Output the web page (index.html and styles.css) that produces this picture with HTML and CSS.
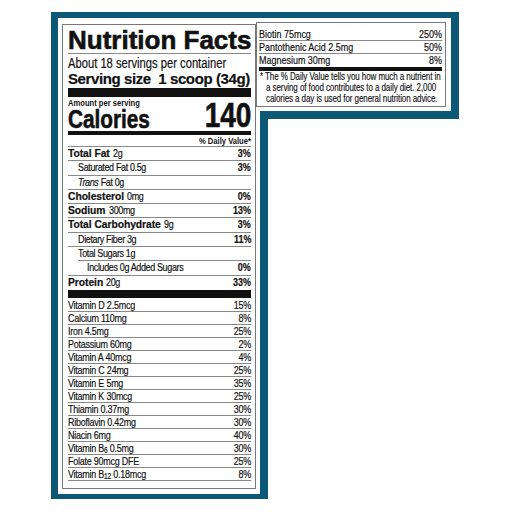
FILE: index.html
```html
<!DOCTYPE html>
<html lang="en">

<head>
    <title>Nutrition Facts</title>
    <link rel="stylesheet" href="styles.css">
</head>

<body>
    <div class="frame">
        <div class="main-col">
            <div class="sheet">
                <div class="label">
                    <h1 class="title">Nutrition Facts</h1>
                    <div class="servings"><span class="cn">About 18 servings per container</span></div>
                    <div class="serving-size">Serving size&nbsp; 1 scoop (34g)</div>
                    <div class="bar bar-thick"></div>

                    <div class="cal-row">
                        <div class="cal-left">
                            <div class="amount"><span class="cn">Amount per serving</span></div>
                            <div class="calories"><span class="cn">Calories</span></div>
                        </div>
                        <div class="cal-num"><span class="cn-r">140</span></div>
                    </div>
                    <div class="bar bar-mid"></div>
                    <div class="dv-head"><span class="cn-r">% Daily Value*</span></div>

                    <ul class="rows">
                        <li class="row"><span><b>Total Fat</b> <span class="cn">2g</span></span><strong class="cn-r">3%</strong></li>
                        <li class="row indent"><span class="cn">Saturated Fat 0.5g</span><strong class="cn-r">3%</strong></li>
                        <li class="row indent"><span class="cn"><i>Trans</i> Fat 0g</span></li>
                        <li class="row"><span><b>Cholesterol</b> <span class="cn">0mg</span></span><strong class="cn-r">0%</strong></li>
                        <li class="row"><span><b>Sodium</b> <span class="cn">300mg</span></span><strong class="cn-r">13%</strong></li>
                        <li class="row"><span><b>Total Carbohydrate</b> <span class="cn">9g</span></span><strong class="cn-r">3%</strong></li>
                        <li class="row indent"><span class="cn">Dietary Fiber 3g</span><strong class="cn-r">11%</strong></li>
                        <li class="row short"><span class="cn">Total Sugars 1g</span></li>
                        <li class="row indent2"><span class="cn">Includes 0g Added Sugars</span><strong class="cn-r">0%</strong></li>
                        <li class="row last"><span><b>Protein</b> <span class="cn">20g</span></span><strong class="cn-r">33%</strong></li>
                    </ul>
                    <div class="bar bar-thick2"></div>

                    <ul class="vitamins">
                        <li class="vit"><span>Vitamin D 2.5mcg</span><span>15%</span></li>
                        <li class="vit"><span>Calcium 110mg</span><span>8%</span></li>
                        <li class="vit"><span>Iron 4.5mg</span><span>25%</span></li>
                        <li class="vit"><span>Potassium 60mg</span><span>2%</span></li>
                        <li class="vit"><span>Vitamin A 40mcg</span><span>4%</span></li>
                        <li class="vit"><span>Vitamin C 24mg</span><span>25%</span></li>
                        <li class="vit"><span>Vitamin E 5mg</span><span>35%</span></li>
                        <li class="vit"><span>Vitamin K 30mcg</span><span>25%</span></li>
                        <li class="vit"><span>Thiamin 0.37mg</span><span>30%</span></li>
                        <li class="vit"><span>Riboflavin 0.42mg</span><span>30%</span></li>
                        <li class="vit"><span>Niacin 6mg</span><span>40%</span></li>
                        <li class="vit"><span>Vitamin B<sub>6</sub> 0.5mg</span><span>30%</span></li>
                        <li class="vit"><span>Folate 90mcg DFE</span><span>25%</span></li>
                        <li class="vit"><span>Vitamin B<sub>12</sub> 0.18mcg</span><span>8%</span></li>
                    </ul>
                </div>
            </div>
        </div>

        <div class="side-col">
            <div class="side-sheet">
                <div class="label side-label">
                    <ul class="vitamins side-rows">
                        <li class="vit"><span>Biotin 75mcg</span><span>250%</span></li>
                        <li class="vit"><span>Pantothenic Acid 2.5mg</span><span>50%</span></li>
                        <li class="vit last"><span>Magnesium 30mg</span><span>8%</span></li>
                    </ul>
                    <div class="bar bar-side"></div>
                    <p class="footnote">* The % Daily Value tells you how much a nutrient in<br>
                        a serving of food contributes to a daily diet. 2,000<br>
                        calories a day is used for general nutrition advice.</p>
                </div>
            </div>
        </div>
    </div>
</body>

</html>
```

FILE: styles.css
```css
body {
    margin: 0;
    background: white;
    color: #111;
    font-family: 'Liberation Sans', Arial, sans-serif;
}

/* no condensed face installed, so squeeze the regular one */
.cn,
.cn-r {
    display: inline-block;
    transform: scaleX(0.8);
    transform-origin: left center;
}

.cn-r {
    transform-origin: right center;
}

.frame {
    display: flex;
    align-items: flex-start;
    margin: 12px 0 0 51px;
}

.main-col {
    background: #0c5877;
    padding: 6px 8px 5px 7px;
    width: 217px;
    box-sizing: border-box;
}

.sheet {
    background: white;
    padding: 6px 4px 5px 4px;
}

.label {
    border: 1px solid #777;
    padding: 3px 4px 7px 5px;
}

.title {
    margin: 0;
    font-size: 26px;
    line-height: 25px;
    font-weight: bold;
    -webkit-text-stroke: 0.6px #111;
    border-bottom: 1px solid #888;
    white-space: nowrap;
}

.servings {
    margin-top: 1px;
    font-size: 14px;
    line-height: 16px;
    white-space: nowrap;
    -webkit-text-stroke: 0.2px #111;
}

.serving-size {
    font-weight: bold;
    font-size: 15px;
    line-height: 16px;
    letter-spacing: -0.4px;
    white-space: nowrap;
    -webkit-text-stroke: 0.2px #111;
}

.bar {
    background: #111;
}

.bar-thick {
    height: 9px;
    margin-top: 1px;
}

.cal-row {
    display: flex;
    justify-content: space-between;
    align-items: flex-end;
    white-space: nowrap;
}

.amount {
    padding-top: 1px;
    font-size: 9.5px;
    line-height: 10px;
    font-weight: bold;
}

.calories {
    font-size: 25px;
    line-height: 22px;
    font-weight: bold;
    -webkit-text-stroke: 0.6px #111;
}

.calories .cn {
    transform: scaleX(0.83);
}

.cal-num {
    font-size: 35px;
    line-height: 30px;
    font-weight: bold;
    -webkit-text-stroke: 0.6px #111;
}

.bar-mid {
    height: 4px;
    margin-top: 1px;
}

.dv-head {
    text-align: right;
    font-size: 9.5px;
    line-height: 11px;
    font-weight: bold;
    border-bottom: 1px solid #888;
    white-space: nowrap;
}

.rows,
.vitamins {
    list-style: none;
    margin: 0;
    padding: 0;
}

.row {
    display: flex;
    justify-content: space-between;
    font-size: 11.5px;
    line-height: 13.3px;
    border-bottom: 1px solid #888;
    white-space: nowrap;
    -webkit-text-stroke: 0.2px #111;
}

.row .cn,
.row .cn-r {
    transform: scaleX(0.78);
}

.row .cn {
    letter-spacing: -0.45px;
}

.row b {
    font-size: 10.3px;
    letter-spacing: -0.05px;
}

.row i {
    font-style: italic;
}

.row strong {
    font-weight: bold;
}

.row.indent {
    padding-left: 10px;
}

.row.short {
    margin-left: 10px;
}

.row.indent2 {
    padding-left: 19px;
}

.row.last {
    border-bottom: none;
    padding-bottom: 1px;
}

.bar-thick2 {
    height: 8px;
}

/* whole list squeezed at once; widened first so it still fills the label */
.vitamins {
    padding-top: 1px;
    width: 128.2%;
    transform: scaleX(0.78);
    transform-origin: left top;
}

.vit {
    display: flex;
    justify-content: space-between;
    font-size: 11.5px;
    line-height: 12px;
    letter-spacing: -0.3px;
    border-bottom: 1px solid #888;
    white-space: nowrap;
    -webkit-text-stroke: 0.2px #111;
}

.vit sub {
    font-size: 8.5px;
    line-height: 0;
    vertical-align: -1px;
}

.side-col {
    background: #0c5877;
    margin-left: -8px;
    width: 199px;
    box-sizing: border-box;
    padding: 6px 8px 8px 0;
}

.side-sheet {
    background: white;
    margin-left: -4px;
    padding: 4px 5px 4px 0;
}

.side-label {
    padding: 5px 3px 2px 2px;
}

.side-rows {
    padding-top: 0;
}

.side-rows .vit {
    letter-spacing: 0;
}

.vit.last {
    border-bottom: none;
    line-height: 13px;
}

.bar-side {
    height: 4px;
}

.footnote {
    margin: 0;
    padding-left: 8.75px;
    text-indent: -7.5px;
    font-size: 10px;
    line-height: 11px;
    letter-spacing: -0.1px;
    white-space: nowrap;
    transform: scaleX(0.8);
    transform-origin: left top;
    -webkit-text-stroke: 0.15px #111;
}
```
